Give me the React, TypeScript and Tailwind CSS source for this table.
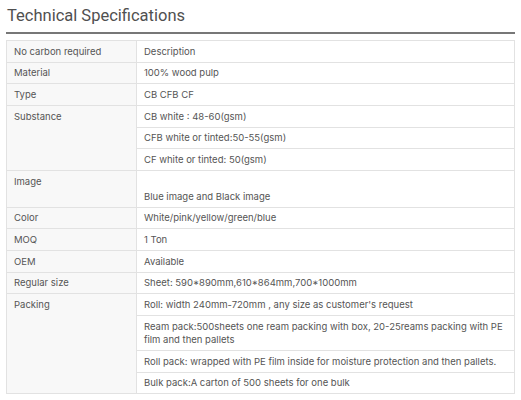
import React from "react";

type Row = { label: string; values: React.ReactNode[]; tall?: boolean };

const rows: Row[] = [
  { label: "No carbon required", values: ["Description"] },
  { label: "Material", values: ["100% wood pulp"] },
  { label: "Type", values: ["CB CFB CF"] },
  {
    label: "Substance",
    values: ["CB white : 48-60(gsm)", "CFB white or tinted:50-55(gsm)", "CF white or tinted: 50(gsm)"],
  },
  { label: "Image", values: ["Blue image and Black image"], tall: true },
  { label: "Color", values: ["White/pink/yellow/green/blue"] },
  { label: "MOQ", values: ["1 Ton"] },
  { label: "OEM", values: ["Available"] },
  { label: "Regular size", values: ["Sheet: 590*890mm,610*864mm,700*1000mm"] },
  {
    label: "Packing",
    values: [
      "Roll: width 240mm-720mm , any size as customer's request",
      "Ream pack:500sheets one ream packing with box, 20-25reams packing with PE film and then pallets",
      "Roll pack: wrapped with PE film inside for moisture protection and then pallets.",
      "Bulk pack:A carton of 500 sheets for one bulk",
    ],
  },
];

export default function App() {
  return (
    <div className="w-[521px] h-[400px] bg-white px-[6px] pt-[4px]">
      <h2 className="font-['Roboto',sans-serif] text-[16.5px] leading-[24px] text-[#505050] pl-[1px]">
        Technical Specifications
      </h2>
      <div className="h-[2px] bg-[#777] mt-[4px]" />
      <table className="mt-[6px] w-[509px] border-collapse font-['Inter',sans-serif] text-[9.5px] leading-[13.3px] text-[#555]">
        <tbody>
          {rows.map((row) =>
            row.values.map((v, i) => (
              <tr key={row.label + i}>
                {i === 0 && (
                  <td
                    rowSpan={row.values.length}
                    className="w-[130px] align-top border border-[#e2e2e2] bg-[#f8f8f8] px-[7px] py-[3.7px]"
                  >
                    {row.label}
                  </td>
                )}
                <td className="align-top border border-[#e2e2e2] px-[7px] py-[3.7px]">
                  {row.tall && <div className="h-[15px]" />}
                  {v}
                </td>
              </tr>
            ))
          )}
        </tbody>
      </table>
    </div>
  );
}
